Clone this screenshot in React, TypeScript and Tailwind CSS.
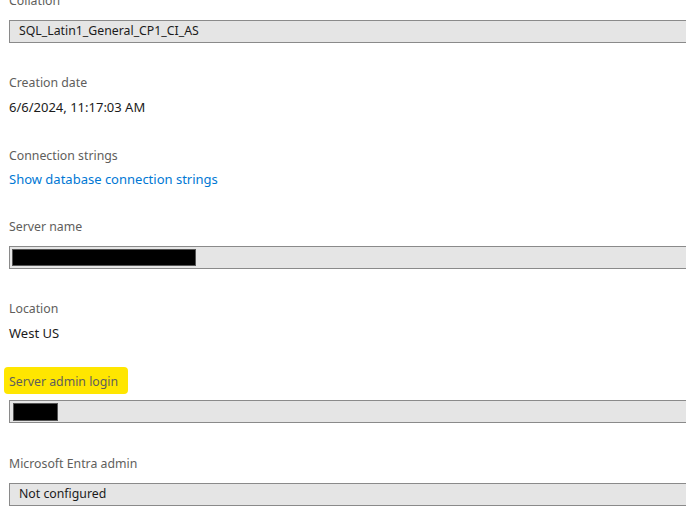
const labelCls = "h-5 pt-px leading-5 text-[12.3px] text-[#605e5c]";
const boxCls =
  "h-[23px] w-[700px] border-y border-l border-[#8a8a8a] bg-[#e5e5e5] flex items-center pl-[9px] text-[12.3px] text-[#1b1b1b]";
const valueCls = "mt-[5px] h-5 leading-5 text-[13px] text-[#1b1b1b]";

function Label({ children }: { children: React.ReactNode }) {
  return <div className={labelCls}>{children}</div>;
}

export default function App() {
  return (
    <div
      className="w-[686px] h-[516px] overflow-hidden bg-white pl-[9px]"
      style={{ fontFamily: '"Noto Sans", "Open Sans", sans-serif' }}
    >
      {/* Collation */}
      <div className="-mt-[10px]">
        <Label>Collation</Label>
        <div className={boxCls + " mt-[10px]"}>SQL_Latin1_General_CP1_CI_AS</div>
      </div>

      {/* Creation date */}
      <div className="mt-[29px]">
        <Label>Creation date</Label>
        <div className={valueCls}>6/6/2024, 11:17:03 AM</div>
      </div>

      {/* Connection strings */}
      <div className="mt-[28px]">
        <Label>Connection strings</Label>
        <a href="#" className="block mt-[4px] h-5 leading-5 text-[13px] text-[#0078d4]">
          Show database connection strings
        </a>
      </div>

      {/* Server name */}
      <div className="mt-[27px]">
        <Label>Server name</Label>
        <div className={boxCls + " mt-[10px] !pl-[2px]"}>
          <div className="h-[17px] w-[184px] bg-black border border-[#555]" />
        </div>
      </div>

      {/* Location */}
      <div className="mt-[29px]">
        <Label>Location</Label>
        <div className={valueCls}>West US</div>
      </div>

      {/* Server admin login, marked with a highlighter */}
      <div className="mt-[24px]">
        <div className="-ml-[5px] w-fit rounded-[4px] bg-[#ffe600] pl-[5px] pr-[10px] pt-[5px] pb-[2px] leading-5 text-[12.3px] text-[#605e5c]">
          Server admin login
        </div>
        <div className={boxCls + " mt-[6px] !pl-[3px]"}>
          <div className="h-[18px] w-[45px] bg-black border border-[#555]" />
        </div>
      </div>

      {/* Microsoft Entra admin */}
      <div className="mt-[30px]">
        <Label>Microsoft Entra admin</Label>
        <div className={boxCls + " mt-[10px]"}>Not configured</div>
      </div>
    </div>
  );
}
